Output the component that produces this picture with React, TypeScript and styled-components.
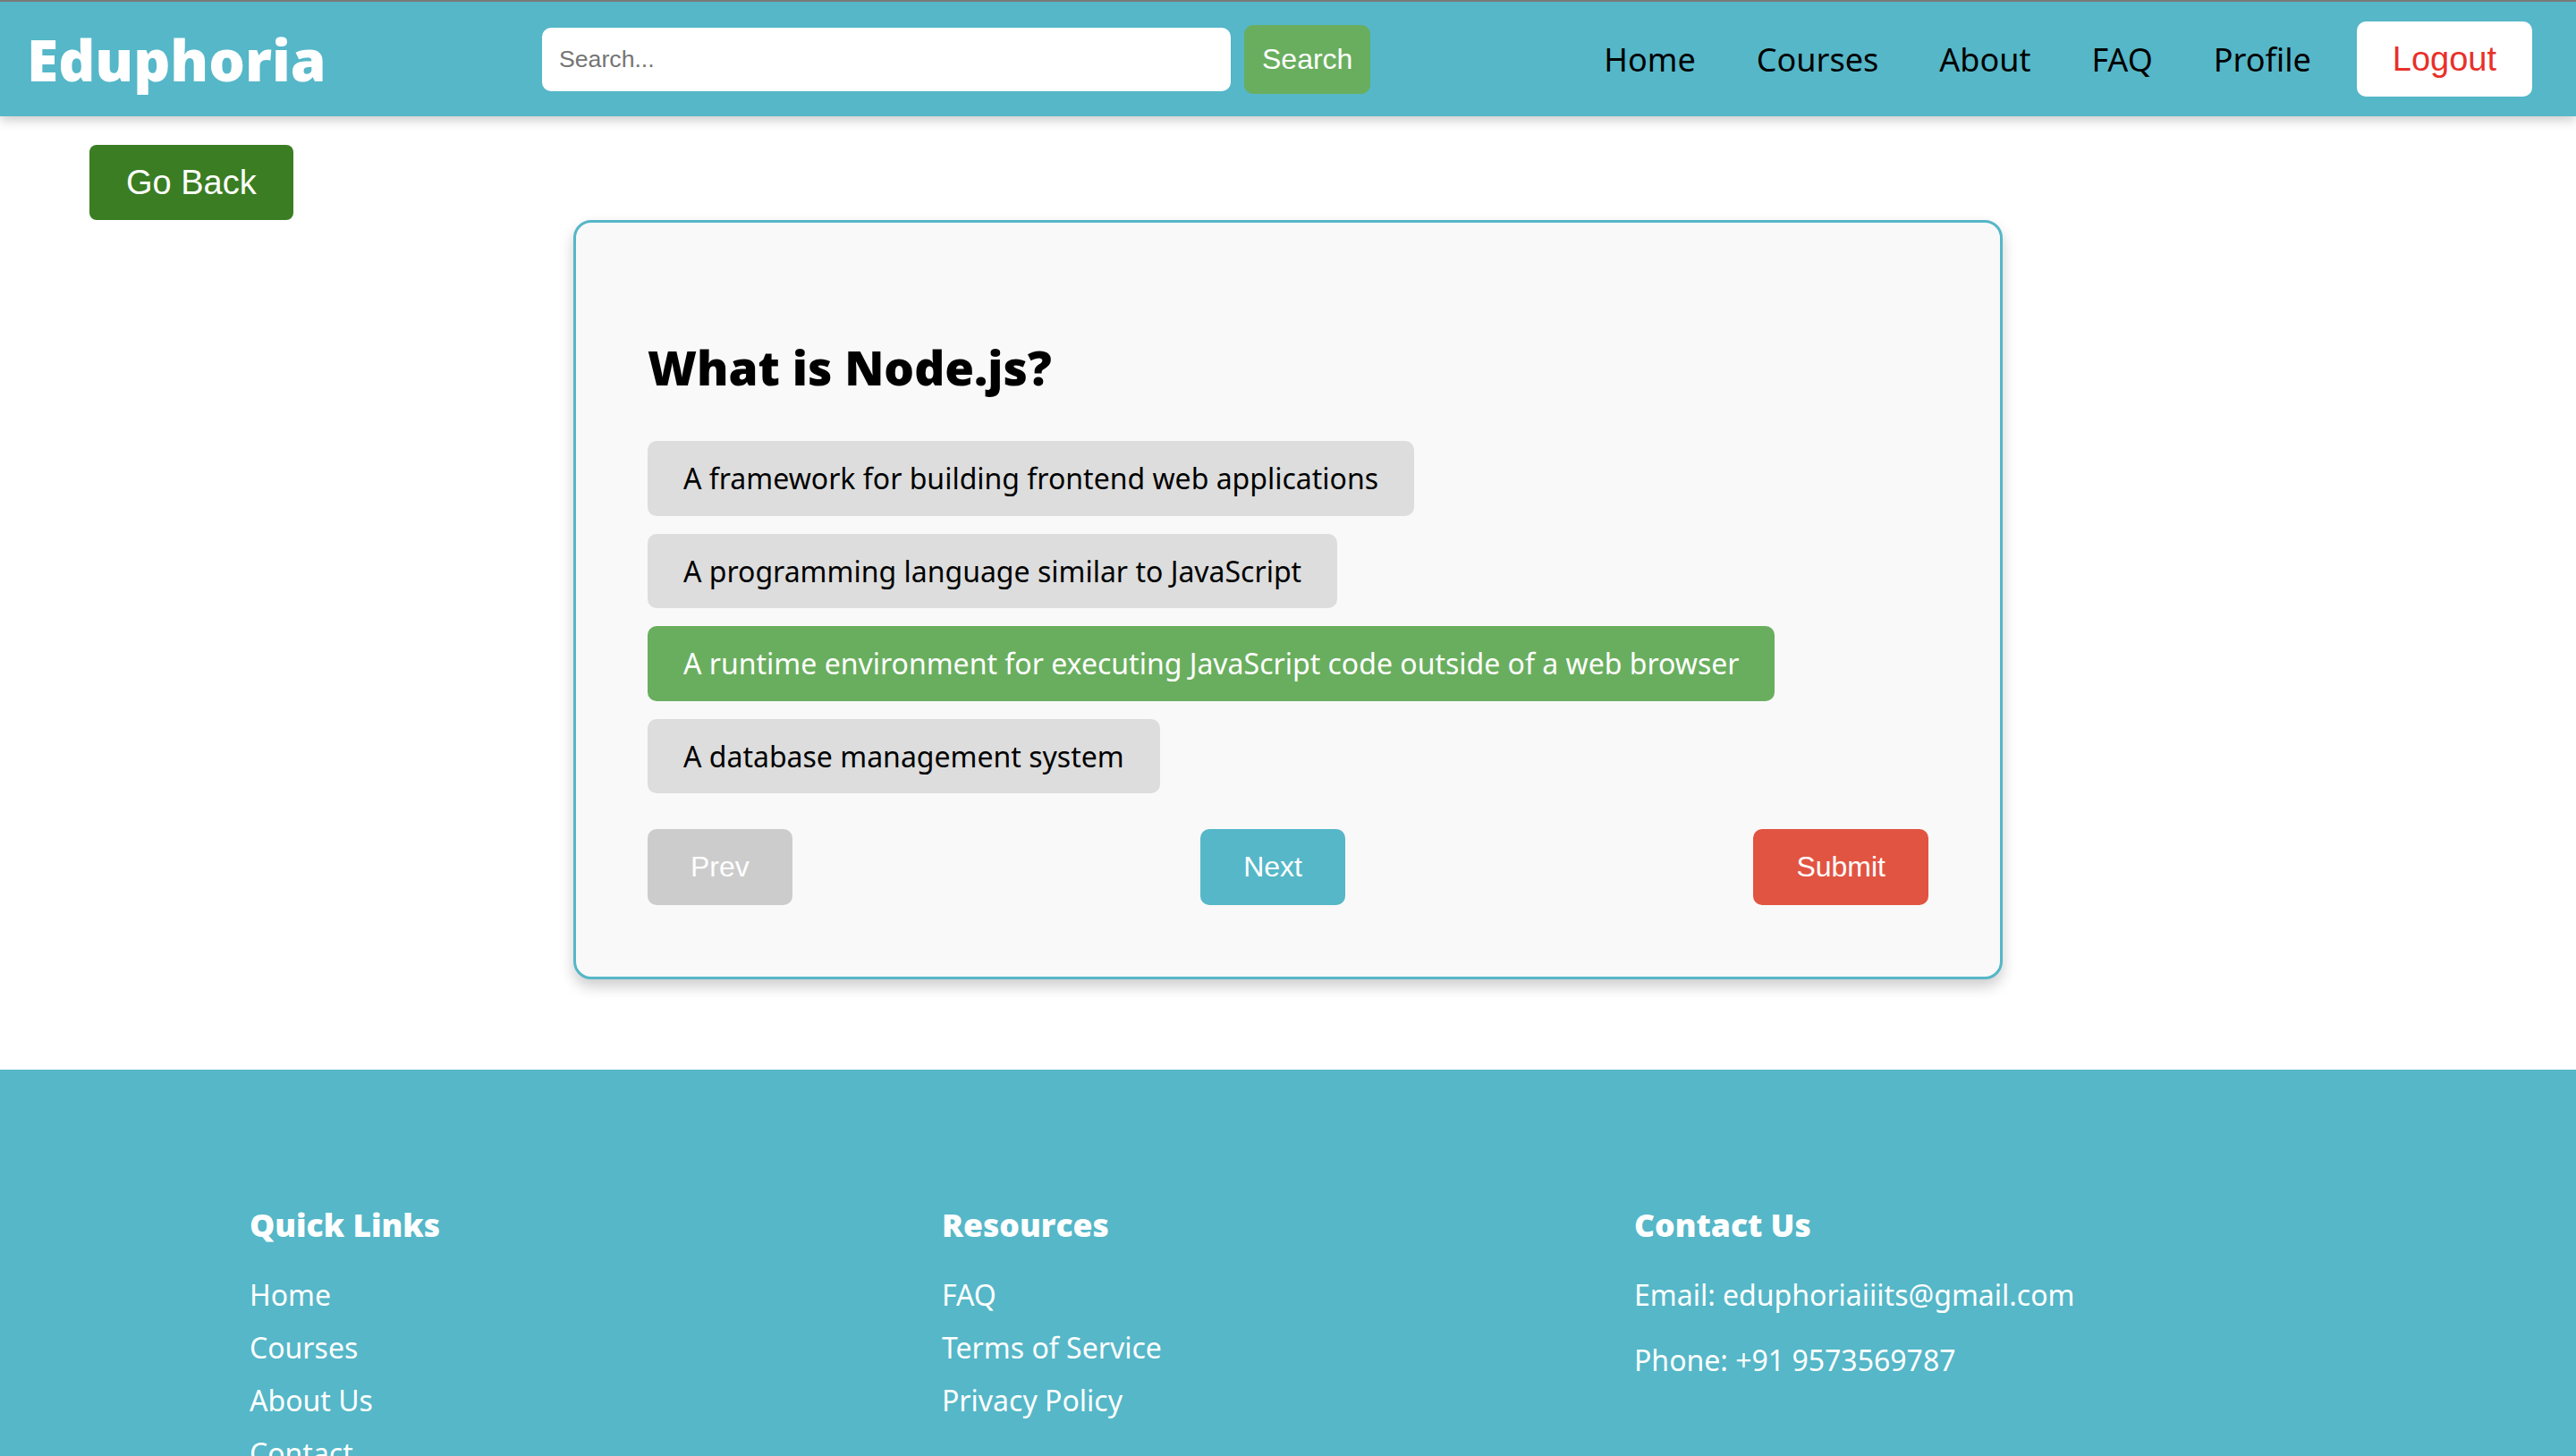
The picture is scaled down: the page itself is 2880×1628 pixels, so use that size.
import React, { useState } from "react";
import styled, { createGlobalStyle } from "styled-components";

const GlobalStyle = createGlobalStyle`
  body {
    margin: 0;
    background: #ffffff;
    font-family: "Noto Sans", "Open Sans", sans-serif;
  }
`;

const TEAL = "#55b7c8";

const options = [
  "A framework for building frontend web applications",
  "A programming language similar to JavaScript",
  "A runtime environment for executing JavaScript code outside of a web browser",
  "A database management system",
];

export default function App(): React.ReactElement {
  const [selected, setSelected] = useState(2);

  return (
    <>
      <GlobalStyle />
      <Nav>
        <Logo>Eduphoria</Logo>
        <SearchForm onSubmit={(e) => e.preventDefault()}>
          <SearchInput placeholder="Search..." />
          <SearchButton type="submit">Search</SearchButton>
        </SearchForm>
        <Menu>
          <MenuLinks>
            <MenuLink href="#">Home</MenuLink>
            <MenuLink href="#">Courses</MenuLink>
            <MenuLink href="#">About</MenuLink>
            <MenuLink href="#">FAQ</MenuLink>
            <MenuLink href="#">Profile</MenuLink>
          </MenuLinks>
          <LogoutButton>Logout</LogoutButton>
        </Menu>
      </Nav>

      <Main>
        <GoBack>Go Back</GoBack>
        <QuizCard>
          <Question>What is Node.js?</Question>
          <Options>
            {options.map((opt, i) => (
              <Option key={opt} $active={i === selected} onClick={() => setSelected(i)}>
                {opt}
              </Option>
            ))}
          </Options>
          <Controls>
            <ControlButton $bg="#cccccc" disabled>
              Prev
            </ControlButton>
            <ControlButton $bg={TEAL}>Next</ControlButton>
            <ControlButton $bg="#e25442">Submit</ControlButton>
          </Controls>
        </QuizCard>
      </Main>

      <Footer>
        <FooterInner>
          <FooterColumn>
            <FooterHeading>Quick Links</FooterHeading>
            <FooterList>
              <li>Home</li>
              <li>Courses</li>
              <li>About Us</li>
              <li>Contact</li>
            </FooterList>
          </FooterColumn>
          <FooterColumn>
            <FooterHeading>Resources</FooterHeading>
            <FooterList>
              <li>FAQ</li>
              <li>Terms of Service</li>
              <li>Privacy Policy</li>
            </FooterList>
          </FooterColumn>
          <FooterColumn>
            <FooterHeading>Contact Us</FooterHeading>
            <ContactLine>Email: eduphoriaiiits@gmail.com</ContactLine>
            <ContactLine>Phone: +91 9573569787</ContactLine>
          </FooterColumn>
        </FooterInner>
      </Footer>
    </>
  );
}

const Nav = styled.header`
  display: flex;
  align-items: center;
  height: 128px;
  padding: 0 49px 0 30px;
  background-color: ${TEAL};
  border-top: 2px solid #7a7a7a;
  box-shadow: 0 4px 12px rgba(0, 0, 0, 0.22);
  position: relative;
  z-index: 2;
`;

const Logo = styled.div`
  flex: 0 0 576px;
  font-family: "Open Sans", "Noto Sans", sans-serif;
  font-size: 64px;
  font-weight: 800;
  color: #ffffff;
`;

const SearchForm = styled.form`
  display: flex;
  align-items: center;
  gap: 15px;
`;

const SearchInput = styled.input`
  box-sizing: border-box;
  width: 770px;
  height: 71px;
  padding: 0 19px;
  border: none;
  border-radius: 10px;
  font-family: "Liberation Sans", Arial, sans-serif;
  font-size: 26.67px;
  outline: none;
  &::placeholder {
    color: #757575;
  }
`;

const SearchButton = styled.button`
  height: 77px;
  padding: 0 20px;
  border: none;
  border-radius: 10px;
  background: #69ae5e;
  color: #ffffff;
  font-family: "Liberation Sans", Arial, sans-serif;
  font-size: 32px;
  cursor: pointer;
`;

const Menu = styled.nav`
  margin-left: auto;
  display: flex;
  align-items: center;
  gap: 51px;
`;

const MenuLinks = styled.div`
  display: flex;
  align-items: center;
  gap: 68px;
`;

const MenuLink = styled.a`
  color: #000000;
  font-size: 36px;
  text-decoration: none;
  &:hover {
    color: #ffffff;
  }
`;

const LogoutButton = styled.button`
  height: 84px;
  padding: 0 40px;
  border: none;
  border-radius: 10px;
  background: #ffffff;
  color: #e8302a;
  font-family: "Liberation Sans", Arial, sans-serif;
  font-size: 38px;
  cursor: pointer;
`;

const Main = styled.main`
  padding: 32px 0 101px;
`;

const GoBack = styled.button`
  display: block;
  margin-left: 100px;
  height: 84px;
  padding: 0 41px;
  border: none;
  border-radius: 8px;
  background: #3a7d22;
  color: #ffffff;
  font-family: "Liberation Sans", Arial, sans-serif;
  font-size: 38px;
  cursor: pointer;
`;

const QuizCard = styled.section`
  box-sizing: border-box;
  width: 1598px;
  margin: 0 auto;
  padding: 80px;
  border: 3px solid ${TEAL};
  border-radius: 20px;
  background: #f9f9f9;
  box-shadow: 0 8px 16px rgba(0, 0, 0, 0.2);
`;

const Question = styled.h2`
  margin: 45px 0 46px;
  font-family: "Open Sans", "Noto Sans", sans-serif;
  font-size: 53px;
  font-weight: 800;
  color: #000000;
`;

const Options = styled.div`
  display: flex;
  flex-direction: column;
  align-items: flex-start;
  gap: 20px;
`;

const Option = styled.button<{ $active: boolean }>`
  padding: 20px 40px;
  border: none;
  border-radius: 10px;
  background: ${(p) => (p.$active ? "#69ae5e" : "#dddddd")};
  color: ${(p) => (p.$active ? "#ffffff" : "#000000")};
  font-family: "Noto Sans", "Open Sans", sans-serif;
  font-size: 32px;
  line-height: 1.362;
  text-align: left;
  cursor: pointer;
`;

const Controls = styled.div`
  display: flex;
  justify-content: space-between;
  margin-top: 40px;
`;

const ControlButton = styled.button<{ $bg: string }>`
  padding: 24px 48px;
  border: none;
  border-radius: 10px;
  background: ${(p) => p.$bg};
  color: #ffffff;
  font-family: "Liberation Sans", Arial, sans-serif;
  font-size: 32px;
  cursor: pointer;
  &:disabled {
    cursor: default;
  }
`;

const Footer = styled.footer`
  background: ${TEAL};
  padding: 149px 0 120px;
  color: #ffffff;
`;

const FooterInner = styled.div`
  display: grid;
  grid-template-columns: repeat(3, 1fr);
  max-width: 2322px;
  margin: 0 auto;
`;

const FooterColumn = styled.div``;

const FooterHeading = styled.h3`
  margin: 0 0 33px;
  font-family: "Open Sans", "Noto Sans", sans-serif;
  font-size: 35.5px;
  font-weight: 800;
`;

const FooterList = styled.ul`
  margin: 0;
  padding: 0;
  list-style: none;
  font-size: 32px;
  li {
    margin-bottom: 16px;
  }
`;

const ContactLine = styled.p`
  margin: 0 0 30px;
  font-size: 32px;
`;
